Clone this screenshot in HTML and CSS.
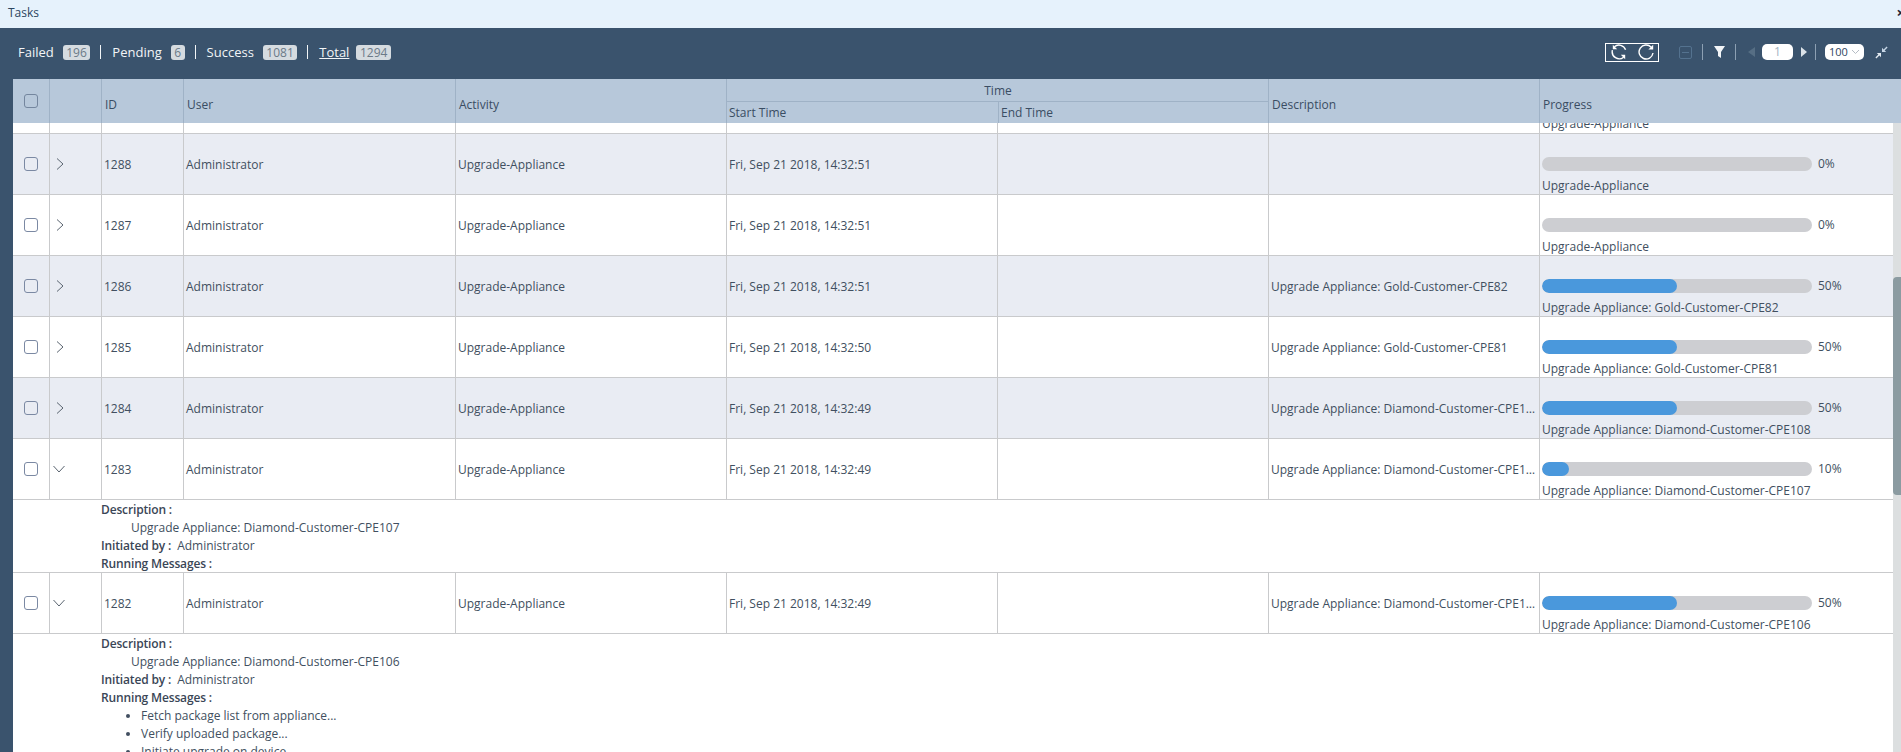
FILE: index.html
```html
<!DOCTYPE html>
<html lang="en">
<head>
<meta charset="utf-8">
<title>Tasks</title>
<link rel="stylesheet" href="styles.css">
</head>
<body>
<div class="page">
  <div class="titlebar"><span>Tasks</span><span class="close">×</span></div>
  <div class="toolbar">
    <div class="counts">
      <span class="count">Failed</span><span class="badge">196</span><span class="divider"></span>
      <span class="count">Pending</span><span class="badge">6</span><span class="divider"></span>
      <span class="count">Success</span><span class="badge">1081</span><span class="divider"></span>
      <span class="count total">Total</span><span class="badge">1294</span>
    </div>
    <div class="tools">
      <div class="refresh-box">
        <svg class="icon16" viewBox="0 0 16 16" fill="none" stroke="#fff" stroke-width="1.4"><path d="M3.4 2.8A7 7 0 0 1 14.6 5.8"/><path d="M1.4 6.2A7 7 0 0 0 12.6 13.2"/><path d="M1.8 .8V5.2H6.2Z" fill="#fff" stroke="none"/><path d="M14.2 15.2V10.8H9.8Z" fill="#fff" stroke="none"/></svg>
        <svg class="icon16" viewBox="0 0 16 16" fill="none" stroke="#fff" stroke-width="1.4"><path d="M13.2 3.2A7 7 0 1 0 15 9"/><path d="M15.2 .8V5.6H10.4Z" fill="#fff" stroke="none"/></svg>
      </div>
      <span class="minus-btn"></span>
      <span class="tool-sep sep-a"></span>
      <svg class="filter" width="11" height="12" viewBox="0 0 11 12"><path d="M0 0H11L7 6V12L4 10V6Z" fill="#f2f5f8"/></svg>
      <span class="tool-sep sep-b"></span>
      <svg class="arrow-prev" width="7" height="10" viewBox="0 0 7 10"><path d="M7 0V10L0 5Z" fill="#566e84"/></svg>
      <span class="page-input">1</span>
      <svg class="arrow-next" width="6" height="10" viewBox="0 0 6 10"><path d="M0 0V10L6 5Z" fill="#dbe2e8"/></svg>
      <span class="tool-sep sep-c"></span>
      <span class="page-size">100<svg class="size-chev" width="7" height="4" viewBox="0 0 7 4" fill="none" stroke="#b5bcc4"><path d="M0 0L3.5 3.5L7 0"/></svg></span>
      <svg class="collapse" width="13" height="13" viewBox="0 0 13 13" fill="#c6d6e6"><path d="M7 6V1.8L8.6 3.4L11.6 0.4L12.6 1.4L9.6 4.4L11.2 6Z"/><path d="M6 7V11.2L4.4 9.6L1.4 12.6L0.4 11.6L3.4 8.6L1.8 7Z" fill="#e4ebf2"/></svg>
    </div>
  </div>
  <div class="main">
    <div class="thead">
      <div class="th th-mid"><span class="checkbox head-check"></span></div>
      <div class="th"></div>
      <div class="th th-low">ID</div>
      <div class="th th-low">User</div>
      <div class="th th-low">Activity</div>
      <div class="th-group">
        <div class="th-group-title">Time</div>
        <div class="th-sub">Start Time</div>
        <div class="th-sub">End Time</div>
      </div>
      <div class="th th-low">Description</div>
      <div class="th th-low">Progress</div>
    </div>
    <div class="tbody-wrap">
      <div class="tbody">
        <div class="row partial">
          <div class="td"></div><div class="td"></div><div class="td"></div><div class="td"></div><div class="td"></div><div class="td"></div><div class="td"></div><div class="td"></div>
          <div class="td progress-cell"><div class="clip-label">Upgrade-Appliance</div></div>
        </div>

        <div class="row shaded">
          <div class="td check-cell"><span class="checkbox"></span></div>
          <div class="td chev-cell"><svg class="chev-right" width="8" height="12" viewBox="0 0 8 12" fill="none" stroke="#5a6470"><path d="M1 .5L7 6L1 11.5"/></svg></div>
          <div class="td">1288</div><div class="td">Administrator</div><div class="td">Upgrade-Appliance</div>
          <div class="td">Fri, Sep 21 2018, 14:32:51</div><div class="td"></div><div class="td"></div>
          <div class="td progress-cell"><div class="bar-line"><div class="track"><div class="fill" style="width:0%"></div></div><span>0%</span></div><div class="bar-label">Upgrade-Appliance</div></div>
        </div>

        <div class="row">
          <div class="td check-cell"><span class="checkbox"></span></div>
          <div class="td chev-cell"><svg class="chev-right" width="8" height="12" viewBox="0 0 8 12" fill="none" stroke="#5a6470"><path d="M1 .5L7 6L1 11.5"/></svg></div>
          <div class="td">1287</div><div class="td">Administrator</div><div class="td">Upgrade-Appliance</div>
          <div class="td">Fri, Sep 21 2018, 14:32:51</div><div class="td"></div><div class="td"></div>
          <div class="td progress-cell"><div class="bar-line"><div class="track"><div class="fill" style="width:0%"></div></div><span>0%</span></div><div class="bar-label">Upgrade-Appliance</div></div>
        </div>

        <div class="row shaded">
          <div class="td check-cell"><span class="checkbox"></span></div>
          <div class="td chev-cell"><svg class="chev-right" width="8" height="12" viewBox="0 0 8 12" fill="none" stroke="#5a6470"><path d="M1 .5L7 6L1 11.5"/></svg></div>
          <div class="td">1286</div><div class="td">Administrator</div><div class="td">Upgrade-Appliance</div>
          <div class="td">Fri, Sep 21 2018, 14:32:51</div><div class="td"></div><div class="td"><span class="ellipsis">Upgrade Appliance: Gold-Customer-CPE82</span></div>
          <div class="td progress-cell"><div class="bar-line"><div class="track"><div class="fill" style="width:50%"></div></div><span>50%</span></div><div class="bar-label">Upgrade Appliance: Gold-Customer-CPE82</div></div>
        </div>

        <div class="row">
          <div class="td check-cell"><span class="checkbox"></span></div>
          <div class="td chev-cell"><svg class="chev-right" width="8" height="12" viewBox="0 0 8 12" fill="none" stroke="#5a6470"><path d="M1 .5L7 6L1 11.5"/></svg></div>
          <div class="td">1285</div><div class="td">Administrator</div><div class="td">Upgrade-Appliance</div>
          <div class="td">Fri, Sep 21 2018, 14:32:50</div><div class="td"></div><div class="td"><span class="ellipsis">Upgrade Appliance: Gold-Customer-CPE81</span></div>
          <div class="td progress-cell"><div class="bar-line"><div class="track"><div class="fill" style="width:50%"></div></div><span>50%</span></div><div class="bar-label">Upgrade Appliance: Gold-Customer-CPE81</div></div>
        </div>

        <div class="row shaded">
          <div class="td check-cell"><span class="checkbox"></span></div>
          <div class="td chev-cell"><svg class="chev-right" width="8" height="12" viewBox="0 0 8 12" fill="none" stroke="#5a6470"><path d="M1 .5L7 6L1 11.5"/></svg></div>
          <div class="td">1284</div><div class="td">Administrator</div><div class="td">Upgrade-Appliance</div>
          <div class="td">Fri, Sep 21 2018, 14:32:49</div><div class="td"></div><div class="td"><span class="ellipsis">Upgrade Appliance: Diamond-Customer-CPE108</span></div>
          <div class="td progress-cell"><div class="bar-line"><div class="track"><div class="fill" style="width:50%"></div></div><span>50%</span></div><div class="bar-label">Upgrade Appliance: Diamond-Customer-CPE108</div></div>
        </div>

        <div class="row">
          <div class="td check-cell"><span class="checkbox"></span></div>
          <div class="td chev-cell"><svg class="chev-down" width="12" height="8" viewBox="0 0 12 8" fill="none" stroke="#5a6470"><path d="M.5 1L6 7L11.5 1"/></svg></div>
          <div class="td">1283</div><div class="td">Administrator</div><div class="td">Upgrade-Appliance</div>
          <div class="td">Fri, Sep 21 2018, 14:32:49</div><div class="td"></div><div class="td"><span class="ellipsis">Upgrade Appliance: Diamond-Customer-CPE107</span></div>
          <div class="td progress-cell"><div class="bar-line"><div class="track"><div class="fill" style="width:10%"></div></div><span>10%</span></div><div class="bar-label">Upgrade Appliance: Diamond-Customer-CPE107</div></div>
        </div>
        <div class="detail detail-short">
          <div class="d-label">Description :</div>
          <div class="d-desc">Upgrade Appliance: Diamond-Customer-CPE107</div>
          <div><span class="d-label">Initiated by :</span><span class="d-by">Administrator</span></div>
          <div class="d-label">Running Messages :</div>
        </div>

        <div class="row">
          <div class="td check-cell"><span class="checkbox"></span></div>
          <div class="td chev-cell"><svg class="chev-down" width="12" height="8" viewBox="0 0 12 8" fill="none" stroke="#5a6470"><path d="M.5 1L6 7L11.5 1"/></svg></div>
          <div class="td">1282</div><div class="td">Administrator</div><div class="td">Upgrade-Appliance</div>
          <div class="td">Fri, Sep 21 2018, 14:32:49</div><div class="td"></div><div class="td"><span class="ellipsis">Upgrade Appliance: Diamond-Customer-CPE106</span></div>
          <div class="td progress-cell"><div class="bar-line"><div class="track"><div class="fill" style="width:50%"></div></div><span>50%</span></div><div class="bar-label">Upgrade Appliance: Diamond-Customer-CPE106</div></div>
        </div>
        <div class="detail">
          <div class="d-label">Description :</div>
          <div class="d-desc">Upgrade Appliance: Diamond-Customer-CPE106</div>
          <div><span class="d-label">Initiated by :</span><span class="d-by">Administrator</span></div>
          <div class="d-label">Running Messages :</div>
          <ul class="d-list">
            <li>Fetch package list from appliance...</li>
            <li>Verify uploaded package...</li>
            <li>Initiate upgrade on device...</li>
          </ul>
        </div>
      </div>
      <div class="scroll-track"><div class="scroll-thumb"></div></div>
    </div>
  </div>
</div>
</body>
</html>
```
FILE: styles.css
```css
* { box-sizing: border-box; }
html, body { margin: 0; height: 100%; overflow: hidden; }
body { font-family: "Open Sans", "Liberation Sans", sans-serif; font-size: 12px; color: #414f60; }

.page { display: flex; flex-direction: column; height: 752px; background: #fff; }

.titlebar { flex: 0 0 28px; display: flex; justify-content: space-between; align-items: center; padding: 0 0 4px 8px; background: #e6f2fc; color: #2c4560; overflow: hidden; }
.close { margin-right: -4px; font-size: 15px; font-weight: 700; line-height: 1; color: #223; }

.toolbar { flex: 0 0 51px; display: flex; justify-content: space-between; align-items: center; padding: 0 13px 3px 18px; background: #3a536d; }
.counts { display: flex; align-items: center; }
.count { font-size: 13px; color: #f2f5f7; margin-right: 9px; }
.total { margin-right: 7px; text-decoration: underline; }
.badge { height: 15px; line-height: 15px; padding: 0 3.5px; border-radius: 3px; background: #d5dbe0; color: #6b7a88; font-size: 12px; }
.divider { width: 1px; height: 14px; margin: 0 11px 0 10px; background: #f2f5f7; }

.tools { display: flex; align-items: center; }
.refresh-box { display: flex; align-items: center; justify-content: space-between; width: 54px; height: 19px; padding: 0 4px 0 5px; border: 1px solid #fff; }
.icon16 { width: 16px; height: 16px; }
.minus-btn { position: relative; width: 13px; height: 13px; margin-left: 20px; border: 1px solid #54728f; border-radius: 2px; }
.minus-btn::after { content: ""; position: absolute; left: 2px; right: 2px; top: 5px; height: 1px; background: #54728f; }
.tool-sep { width: 1px; height: 16px; background: #8da0b3; }
.sep-a { margin-left: 10px; }
.filter { margin-left: 11px; }
.sep-b { margin-left: 10px; }
.arrow-prev { margin-left: 12px; }
.page-input { width: 31px; height: 16px; margin-left: 7px; border-radius: 5px; background: #fff; color: #a3b3c2; text-align: center; line-height: 16px; }
.arrow-next { margin-left: 8px; }
.sep-c { margin-left: 8px; }
.page-size { display: flex; align-items: center; justify-content: space-between; width: 39px; height: 16px; margin-left: 9px; padding: 0 5px 0 4px; border-radius: 5px; background: #fff; color: #2d4560; font-size: 11px; line-height: 16px; }
.collapse { margin-left: 11px; }

.main { flex: 1; display: flex; flex-direction: column; min-height: 0; padding-left: 13px; background: #3a536d; }

.thead, .row { display: grid; grid-template-columns: 36px 52px 82px 272px 271px 271px 271px 271px 1fr; }

.thead { grid-template-columns: 36px 52px 82px 272px 271px 542px 271px 1fr; flex: 0 0 44px; background: #b7c8da; color: #3a4d63; }
.th { display: flex; align-items: center; padding-left: 3px; border-left: 1px solid #9fb2c6; }
.th:first-child { border-left: 0; }
.th-low { padding-top: 6px; }
.th-mid { justify-content: center; padding: 0; }
.th-group { display: grid; grid-template-columns: 271px 271px; grid-template-rows: 23px 21px; border-left: 1px solid #9fb2c6; }
.th-group-title { grid-column: 1 / 3; display: flex; align-items: center; justify-content: center; border-bottom: 1px solid #9fb2c6; }
.th-sub { display: flex; align-items: center; padding-left: 2px; }
.th-sub + .th-sub { border-left: 1px solid #9fb2c6; }
.checkbox { display: block; width: 14px; height: 14px; border: 1px solid #7b89a3; border-radius: 3px; background: transparent; }
.head-check { margin-top: -1px; border-color: #74869e; }

.tbody-wrap { flex: 1; display: flex; min-height: 0; background: #fff; }
.tbody { flex: 1; min-width: 0; overflow: hidden; }
.scroll-track { flex: 0 0 8px; background: #dcdfe0; }
.scroll-thumb { height: 218px; margin-top: 154px; border-radius: 4px 0 0 4px; background: #8b9ba1; }

.row { height: 61px; border-bottom: 1px solid #c9cacc; background: #fff; }
.row.shaded { background: #e9ecf3; }
.row.partial { height: 11px; }
.td { display: flex; align-items: center; min-width: 0; padding-left: 2px; border-left: 1px solid #c9cacc; white-space: nowrap; }
.td:first-child { border-left: 0; }
.ellipsis { overflow: hidden; text-overflow: ellipsis; padding-right: 2px; }
.check-cell { justify-content: center; padding: 0 0 2px; }
.chev-cell { padding: 0 0 2px 6px; }
.chev-right { margin-left: 0; }
.chev-down { margin-left: -3px; }

.progress-cell { flex-direction: column; align-items: flex-start; justify-content: flex-start; padding-left: 2px; }
.clip-label { height: 10px; margin-top: -8px; line-height: 18px; }
.partial .progress-cell { overflow: hidden; justify-content: flex-start; }
.bar-line { display: flex; align-items: center; margin-top: 23px; line-height: 14px; }
.bar-line span { margin-left: 6px; margin-top: -1px; }
.track { width: 270px; height: 14px; border-radius: 7px; background: #cdced2; overflow: hidden; }
.fill { height: 14px; border-radius: 7px; background: #4a98dc; }
.bar-label { margin-top: 6px; line-height: 18px; }

.detail { padding: 1px 0 0 88px; border-bottom: 1px solid #c9cacc; line-height: 18px; }
.detail-short { height: 73px; }
.d-label { font-weight: 600; letter-spacing: -0.15px; color: #3a4656; }
.d-desc { padding-left: 30px; }
.d-by { margin-left: 6px; }
.d-list { margin: 0; padding-left: 40px; }
```
